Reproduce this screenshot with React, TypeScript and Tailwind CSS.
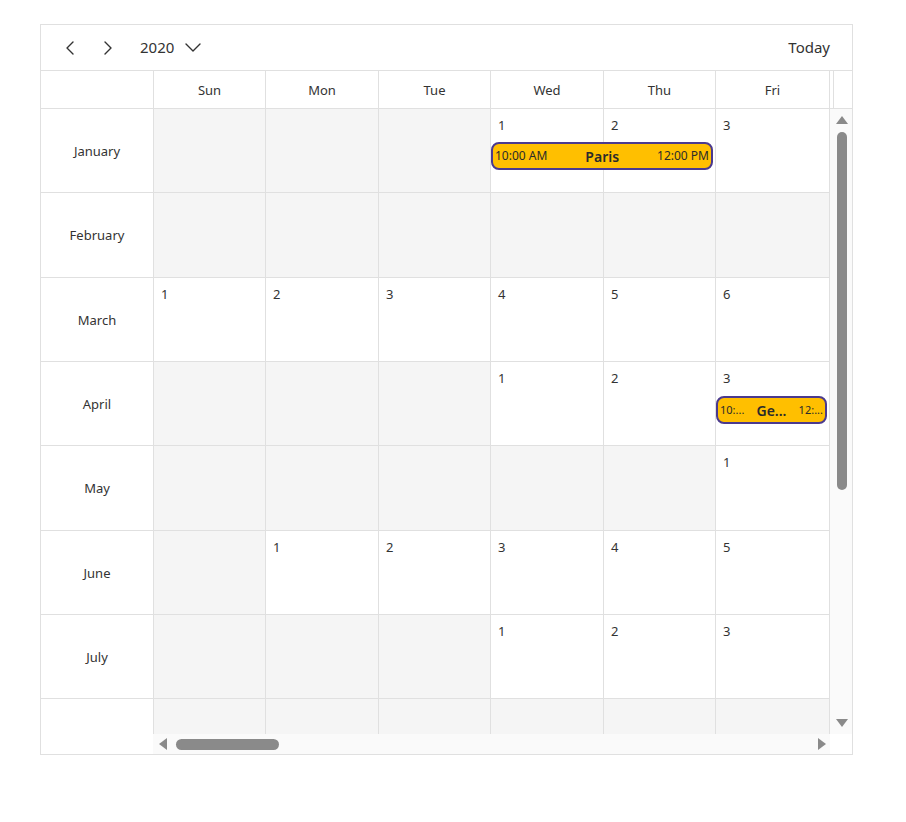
import React from 'react'

type Ev = {
  row: number
  col: number
  span: number
  start: string
  title: string
  end: string
  top: number
  small?: boolean
}

const days = ['Sun', 'Mon', 'Tue', 'Wed', 'Thu', 'Fri']
const colW = [112, 113, 112, 113, 112, 114]
const rowH = [84, 85, 84, 84, 85, 84, 84, 84]

// first weekday of each month in 2020 (0 = Sun)
const months = [
  { name: 'January', first: 3 },
  { name: 'February', first: 6 },
  { name: 'March', first: 0 },
  { name: 'April', first: 3 },
  { name: 'May', first: 5 },
  { name: 'June', first: 1 },
  { name: 'July', first: 3 },
  { name: '', first: 6 },
]

const events: Ev[] = [
  { row: 0, col: 3, span: 2, start: '10:00 AM', title: 'Paris', end: '12:00 PM', top: 33 },
  { row: 3, col: 5, span: 1, start: '10:...', title: 'Ge...', end: '12:...', top: 34, small: true },
]

const Chevron = ({ dir }: { dir: 'left' | 'right' | 'down' }) => {
  const d =
    dir === 'left' ? 'M9 2 L3 8 L9 14' : dir === 'right' ? 'M3 2 L9 8 L3 14' : 'M1 4 L8 11 L15 4'
  const w = dir === 'down' ? 16 : 12
  return (
    <svg width={w} height="16" viewBox={`0 0 ${w} 16`} fill="none">
      <path d={d} stroke="#333" strokeWidth="1.4" strokeLinecap="round" strokeLinejoin="round" />
    </svg>
  )
}

function EventChip({ ev }: { ev: Ev }) {
  const left = colW.slice(0, ev.col).reduce((a, b) => a + b, 0)
  const width = colW.slice(ev.col, ev.col + ev.span).reduce((a, b) => a + b, 0) - 3
  return (
    <div
      className="absolute h-[28px] rounded-[8px] border-2 border-[#4b3a8e] bg-[#ffbf00] flex items-center justify-between px-[2px] text-[#2b2b2b]"
      style={{ left: left, top: ev.top, width }}
    >
      <span className={ev.small ? 'text-[11px]' : 'text-[12px]'}>{ev.start}</span>
      <span className="text-[14px] font-semibold">{ev.title}</span>
      <span className={ev.small ? 'text-[11px]' : 'text-[12px]'}>{ev.end}</span>
    </div>
  )
}

export default function App() {
  return (
    <div className="w-[906px] h-[822px] bg-white font-['Noto_Sans',sans-serif] text-[#333]">
      <div className="ml-[40px] pt-[24px]">
        <div className="w-[813px] h-[731px] border border-[#e0e0e0] flex flex-col">
          {/* toolbar */}
          <div className="h-[46px] shrink-0 border-b border-[#e0e0e0] flex items-center pl-[23px] pr-[22px]">
            <button className="w-[12px] flex items-center">
              <Chevron dir="left" />
            </button>
            <button className="ml-[26px] w-[12px] flex items-center">
              <Chevron dir="right" />
            </button>
            <div className="ml-[26px] flex items-center gap-[11px]">
              <span className="text-[15px] leading-none">2020</span>
              <Chevron dir="down" />
            </div>
            <span className="ml-auto text-[15px] leading-none">Today</span>
          </div>

          {/* day headers */}
          <div className="h-[38px] shrink-0 border-b border-[#e0e0e0] flex">
            <div className="w-[113px] shrink-0 border-r border-[#e0e0e0]" />
            {days.map((d, i) => (
              <div
                key={d}
                className="shrink-0 border-r border-[#e0e0e0] flex items-center justify-center pt-[2px] text-[13px]"
                style={{ width: colW[i] }}
              >
                {d}
              </div>
            ))}
            <div className="w-[4px] shrink-0 border-r border-[#e0e0e0]" />
          </div>

          {/* body */}
          <div className="h-[625px] shrink-0 flex">
            <div className="w-[789px] overflow-hidden">
              {months.map((m, r) => (
                <div key={r} className="flex border-b border-[#e0e0e0] shrink-0" style={{ height: rowH[r] }}>
                  <div className="w-[113px] shrink-0 border-r border-[#e0e0e0] flex items-center justify-center pt-[2px] text-[13px]">
                    {m.name}
                  </div>
                  <div className="relative flex">
                    {days.map((_, c) => {
                      const num = c - m.first + 1
                      const inMonth = m.name !== '' && num >= 1
                      return (
                        <div
                          key={c}
                          className={`shrink-0 border-r border-[#e0e0e0] pl-[7px] pt-[7px] text-[13px] leading-[18px] ${
                            inMonth ? 'bg-white' : 'bg-[#f5f5f5]'
                          }`}
                          style={{ width: colW[c] }}
                        >
                          {inMonth ? num : ''}
                        </div>
                      )
                    })}
                    {events
                      .filter(e => e.row === r)
                      .map(e => (
                        <EventChip key={e.title} ev={e} />
                      ))}
                  </div>
                </div>
              ))}
            </div>
            {/* vertical scrollbar */}
            <div className="w-[22px] shrink-0 bg-[#fafafa] flex flex-col items-center pl-[1px]">
              <div className="mt-[7px] w-0 h-0 border-l-[6px] border-r-[6px] border-b-[8px] border-l-transparent border-r-transparent border-b-[#8a8a8a]" />
              <div className="mt-[8px] w-[10px] h-[358px] rounded-full bg-[#8a8a8a]" />
              <div className="mt-auto mb-[7px] w-0 h-0 border-l-[6px] border-r-[6px] border-t-[8px] border-l-transparent border-r-transparent border-t-[#8a8a8a]" />
            </div>
          </div>

          {/* horizontal scrollbar */}
          <div className="h-[20px] shrink-0 flex">
            <div className="w-[112px] shrink-0 bg-white" />
            <div className="w-[677px] shrink-0 bg-[#fafafa] flex items-center pl-[6px] pr-[4px]">
              <div className="w-0 h-0 border-t-[6px] border-b-[6px] border-r-[8px] border-t-transparent border-b-transparent border-r-[#8a8a8a]" />
              <div className="ml-[9px] w-[103px] h-[11px] rounded-full bg-[#8a8a8a]" />
              <div className="ml-auto w-0 h-0 border-t-[6px] border-b-[6px] border-l-[8px] border-t-transparent border-b-transparent border-l-[#8a8a8a]" />
            </div>
            <div className="flex-1 bg-white" />
          </div>
        </div>
      </div>
    </div>
  )
}
